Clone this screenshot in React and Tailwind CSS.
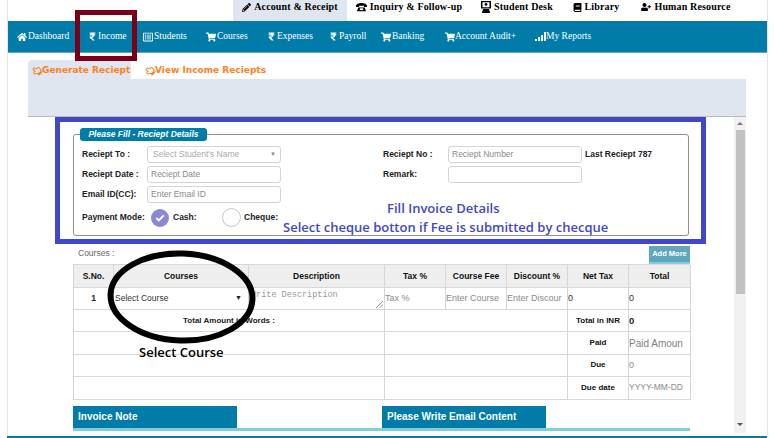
import React from "react";
import { FaHome, FaRupeeSign, FaRegListAlt, FaShoppingCart, FaPencilAlt, FaBook, FaUserPlus, FaRegHandPointUp } from "react-icons/fa";

const serif = { fontFamily: '"Liberation Serif", serif' };

function PhoneIcon() {
  return (
    <svg width="11" height="10" viewBox="0 0 12 10" fill="currentColor">
      <path d="M0 4C0 1.5 3 .5 6 .5s6 1 6 3.5v1H8.6V3.6H3.4V5H0z" />
      <path d="M2.5 5.6h7L11 9.5H1z" />
      <rect x="4.2" y="6.4" width="3.6" height="2" fill="#fff" />
    </svg>
  );
}
function DeskIcon() {
  return (
    <svg width="10" height="12" viewBox="0 0 10 12" fill="currentColor">
      <path d="M0 0h10v7.5H0zM1.5 1.2v5h7v-5z" fillRule="evenodd" />
      <circle cx="5" cy="3.4" r="1.4" />
      <path d="M2 8h6l1 4H1z" />
    </svg>
  );
}
function Bars() {
  return (
    <svg width="11" height="9" viewBox="0 0 11 9" fill="currentColor">
      <rect x="0" y="7" width="2" height="2" />
      <rect x="3" y="5" width="2" height="4" />
      <rect x="6" y="3" width="2" height="6" />
      <rect x="9" y="0" width="2" height="9" />
    </svg>
  );
}

function TopItem({ icon, label, active, w }) {
  return (
    <div className={`flex h-full items-start justify-center gap-[3px] whitespace-nowrap pt-[1px] text-[10px] font-bold leading-[12px] tracking-[0.15px] text-black ${w} ${active ? "bg-[#e0e6ef]" : ""}`}>
      <span className="flex h-[12px] items-center">{icon}</span>
      <span>{label}</span>
    </div>
  );
}

function NavItem({ icon, label, w, gap = "gap-[1px]" }) {
  return (
    <div className={`flex items-center whitespace-nowrap text-[9.5px] text-white ${gap} ${w}`}>
      {icon}
      <span>{label}</span>
    </div>
  );
}

function Label({ children, w = "w-[65px]" }) {
  return <span className={`${w} shrink-0 whitespace-nowrap text-[8.5px] font-bold text-[#222]`}>{children}</span>;
}

function Field({ placeholder, select }) {
  return (
    <div className="flex h-[17px] w-[134px] items-center justify-between rounded-[3px] border border-[#d4d4d4] bg-white pl-[3px] pr-[4px] text-[8.5px] text-[#8a8a8a]">
      <span className={select ? "pl-[2px] text-[#aaa]" : ""}>{placeholder}</span>
      {select && <span className="text-[6px] text-[#888]">▼</span>}
    </div>
  );
}

const cols = "grid grid-cols-[40px_135px_136px_61px_61px_61px_61px_62px]";
const td = "flex items-center border-r border-b border-[#d6d6d6] overflow-hidden whitespace-nowrap";

function Th({ children }) {
  return <div className={`${td} h-[23px] justify-center bg-[#eeeeee] text-[8.5px] font-bold text-[#111]`}>{children}</div>;
}
function Inp({ children, extra = "" }) {
  return <div className={`${td} h-[22px] text-[9px] text-[#8a8a8a] ${extra}`}>{children}</div>;
}
function SumRow({ label, value, valueClass = "", left }) {
  return (
    <>
      <div className={`${td} col-span-3 h-[22.4px] justify-center text-[8px] font-bold text-[#222]`}>{left}</div>
      <div className={`${td} col-span-3 h-[22.4px]`} />
      <div className={`${td} h-[22.4px] justify-center text-[8px] font-bold text-[#111]`}>{label}</div>
      <div className={`${td} h-[22.4px] ${valueClass}`}>{value}</div>
    </>
  );
}

export default function App() {
  return (
    <div className="relative h-[438px] w-[774px] overflow-hidden bg-white" style={{ fontFamily: '"Liberation Sans", sans-serif' }}>
      <div className="ml-[7px] mr-[6px] flex h-[438px] flex-col border-x border-[#e4e4e4]">
        {/* top menu */}
        <div className="flex h-[21px] shrink-0 pl-[225px]" style={serif}>
          <TopItem active w="w-[114px]" label="Account & Receipt" icon={<FaPencilAlt className="text-[9px]" />} />
          <TopItem w="w-[124px]" label="Inquiry & Follow-up" icon={<PhoneIcon />} />
          <TopItem w="w-[92px]" label="Student Desk" icon={<DeskIcon />} />
          <TopItem w="w-[66px]" label="Library" icon={<FaBook className="text-[9px]" />} />
          <TopItem w="w-[114px]" label="Human Resource" icon={<FaUserPlus className="text-[10px]" />} />
        </div>
        {/* teal nav */}
        <div className="flex h-[32px] shrink-0 items-center border-b border-[#5fa9c4] bg-[#017ca8] pl-[9px]" style={serif}>
          <NavItem w="w-[71px]" label="Dashboard" icon={<FaHome className="text-[10px]" />} />
          <NavItem w="w-[55px]" label="Income" icon={<FaRupeeSign className="text-[9px]" />} />
          <NavItem w="w-[63px]" label="Students" icon={<FaRegListAlt className="text-[10px]" />} />
          <NavItem w="w-[61px]" label="Courses" icon={<FaShoppingCart className="text-[10px]" />} />
          <NavItem w="w-[62px]" label="Expenses" icon={<FaRupeeSign className="text-[9px]" />} />
          <NavItem w="w-[52px]" label="Payroll" icon={<FaRupeeSign className="text-[9px]" />} />
          <NavItem w="w-[64px]" label="Banking" icon={<FaShoppingCart className="text-[10px]" />} />
          <NavItem w="w-[90px]" gap="gap-0" label="Account Audit+" icon={<FaShoppingCart className="text-[10px]" />} />
          <NavItem w="w-[70px]" gap="gap-0" label="My Reports" icon={<Bars />} />
        </div>
        {/* tabs */}
        <div className="ml-[20px] mt-[7px] flex h-[19px] shrink-0 items-center text-[9px] font-bold text-[#ff7f1e]" style={{ fontFamily: '"DejaVu Sans", sans-serif' }}>
          <div className="flex h-full w-[103px] items-center gap-[0px] rounded-t-[4px] bg-[#e0e6ef] pl-[4px] pt-[2px]">
            <FaRegHandPointUp className="shrink-0 -rotate-45 text-[10px]" />
            <span className="whitespace-nowrap">Generate Reciept</span>
          </div>
          <div className="ml-[14px] flex items-center gap-[0px] pt-[2px]">
            <FaRegHandPointUp className="shrink-0 -rotate-45 text-[10px]" />
            <span className="whitespace-nowrap">View Income Reciepts</span>
          </div>
        </div>
        {/* grey band */}
        <div className="ml-[20px] h-[38px] w-[718px] shrink-0 border-b border-[#bbbbbb] bg-[#e0e6ef]" />
        {/* scrolling area */}
        <div className="relative ml-[20px] flex h-[316px] w-[718px] shrink-0 overflow-hidden">
          <div className="w-[706px] shrink-0 pl-[45px] pt-[17px]">
            {/* fieldset */}
            <div className="relative h-[102px] w-[616px] rounded-[3px] border border-[#8f8f8f] pl-[8px] pt-[11px]">
              <div className="absolute -top-[7px] left-[6px] flex h-[13px] w-[127px] items-center justify-center rounded-[3px] bg-[#017ca8] text-[8.5px] font-bold italic text-white">
                Please Fill - Reciept Details
              </div>
              <div className="grid grid-cols-[301px_1fr] gap-y-[3px]">
                <div className="flex items-center"><Label>Reciept To :</Label><Field placeholder="Select Student's Name" select /></div>
                <div className="flex items-center"><Label>Reciept No :</Label><Field placeholder="Reciept Number" /><span className="ml-[3px] whitespace-nowrap text-[8.5px] font-bold text-[#222]">Last Reciept 787</span></div>
                <div className="flex items-center"><Label>Reciept Date :</Label><Field placeholder="Reciept Date" /></div>
                <div className="flex items-center"><Label>Remark:</Label><Field placeholder="" /></div>
                <div className="flex items-center"><Label>Email ID(CC):</Label><Field placeholder="Enter Email ID" /></div>
                <div />
              </div>
              <div className="mt-[5px] flex items-center">
                <Label w="w-[69px]">Payment Mode:</Label>
                <div className="flex h-[18px] w-[18px] items-center justify-center rounded-full bg-[#8a87d6] text-white">
                  <svg width="10" height="8" viewBox="0 0 10 8"><path d="M1.3 4l2.5 2.4L8.8 1.4" stroke="#fff" strokeWidth="2" fill="none" /></svg>
                </div>
                <span className="ml-[4px] w-[27px] text-[8.5px] font-bold text-[#222]">Cash:</span>
                <div className="ml-[22px] h-[19px] w-[19px] rounded-full border border-[#c4c4c4] bg-white" />
                <span className="ml-[3px] text-[8.5px] font-bold text-[#222]">Cheque:</span>
              </div>
            </div>
            {/* courses */}
            <div className="relative mt-[6px] flex h-[22px] w-[617px] items-end">
              <span className="ml-[5px] pb-[4px] text-[8.5px] text-[#666]">Courses :</span>
              <div className="absolute bottom-0 right-0 flex h-[18px] w-[41px] items-center justify-center border-b-2 border-[#7fcfe0] bg-[#62a6bd] text-[7.5px] font-bold text-white">Add More</div>
            </div>
            <div className={`${cols} w-[617px] border-l border-t border-[#d6d6d6]`}>
              <Th>S.No.</Th><Th>Courses</Th><Th>Description</Th><Th>Tax %</Th><Th>Course Fee</Th><Th>Discount %</Th><Th>Net Tax</Th><Th>Total</Th>
              <div className={`${td} h-[22px] justify-center text-[8.5px] font-bold text-[#222]`}>1</div>
              <div className={`${td} relative h-[22px] pl-[1px] text-[8.5px] text-[#333]`}>Select Course<span className="absolute right-[6px] text-[7px] text-[#222]">▼</span></div>
              <div className={`${td} relative h-[22px] items-start pl-[2px] pt-[1px] text-[8.5px] text-[#999]`} style={{ fontFamily: '"Liberation Mono", monospace' }}>
                Write Description
                <svg className="absolute bottom-[1px] right-[1px]" width="7" height="7" viewBox="0 0 7 7"><path d="M0 7L7 0M3.5 7L7 3.5" stroke="#777" strokeWidth="0.8" /></svg>
              </div>
              <Inp>Tax %</Inp><Inp>Enter Course</Inp><Inp>Enter Discour</Inp>
              <Inp extra="text-[#333]">0</Inp><Inp extra="text-[#333]">0</Inp>
              <SumRow left="Total Amount in Words :" label="Total in INR" value="0" valueClass="text-[9.5px] font-bold text-[#222]" />
              <SumRow label="Paid" value="Paid Amoun" valueClass="text-[10px] text-[#808080]" />
              <SumRow label="Due" value="0" valueClass="text-[9px] text-[#8a8a8a]" />
              <SumRow label="Due date" value="YYYY-MM-DD" valueClass="text-[8.5px] text-[#8a8a8a]" />
            </div>
            {/* notes */}
            <div className="mt-[6px] w-[617px] border-b-[3px] border-[#7fcfe0]">
              <div className="flex h-[22px]">
                <div className="flex w-[164px] items-center bg-[#017ca8] pl-[5px] text-[10px] font-bold text-white">Invoice Note</div>
                <div className="ml-[145px] flex w-[164px] items-center bg-[#017ca8] pl-[5px] text-[10px] font-bold text-white">Please Write Email Content</div>
              </div>
            </div>
          </div>
          {/* scrollbar */}
          <div className="flex w-[12px] shrink-0 flex-col items-center bg-[#f1f1f1]">
            <div className="flex h-[13px] w-full items-center justify-center"><div className="h-0 w-0 border-x-[3px] border-b-[3px] border-x-transparent border-b-[#777]" /></div>
            <div className="h-[164px] w-[9px] bg-[#c1c1c1]" />
            <div className="flex-1" />
            <div className="mb-[2px] flex h-[13px] w-full items-center justify-center"><div className="h-0 w-0 border-x-[3px] border-t-[3px] border-x-transparent border-t-[#555]" /></div>
          </div>
        </div>
      </div>
      {/* footer strip */}
      <div className="absolute bottom-0 left-[7px] h-[2px] w-[760px] bg-[#017ca8]" />

      {/* annotations */}
      <div className="absolute left-[75px] top-[10px] h-[51px] w-[62px] border-[5px] border-[#7b0017]" />
      <div className="absolute left-[55px] top-[117px] h-[127px] w-[651px] border-[5px] border-[#4247c8]" />
      <div className="absolute left-[387px] top-[199px] text-[13px] font-semibold text-[#4247c8]" style={{ fontFamily: '"Open Sans", sans-serif' }}>Fill Invoice Details</div>
      <div className="absolute left-[283px] top-[218px] whitespace-nowrap text-[13px] font-semibold text-[#4247c8]" style={{ fontFamily: '"Open Sans", sans-serif' }}>Select cheque botton if Fee is submitted by checque</div>
      <svg className="absolute left-[105px] top-[249px]" width="154" height="96" viewBox="0 0 154 96">
        <ellipse cx="76.5" cy="48" rx="71" ry="43.5" fill="none" stroke="#000" strokeWidth="6" transform="rotate(2 76.5 48)" />
      </svg>
      <div className="absolute left-[139px] top-[343px] text-[13px] font-semibold text-black" style={{ fontFamily: '"Open Sans", sans-serif' }}>Select Course</div>
    </div>
  );
}
